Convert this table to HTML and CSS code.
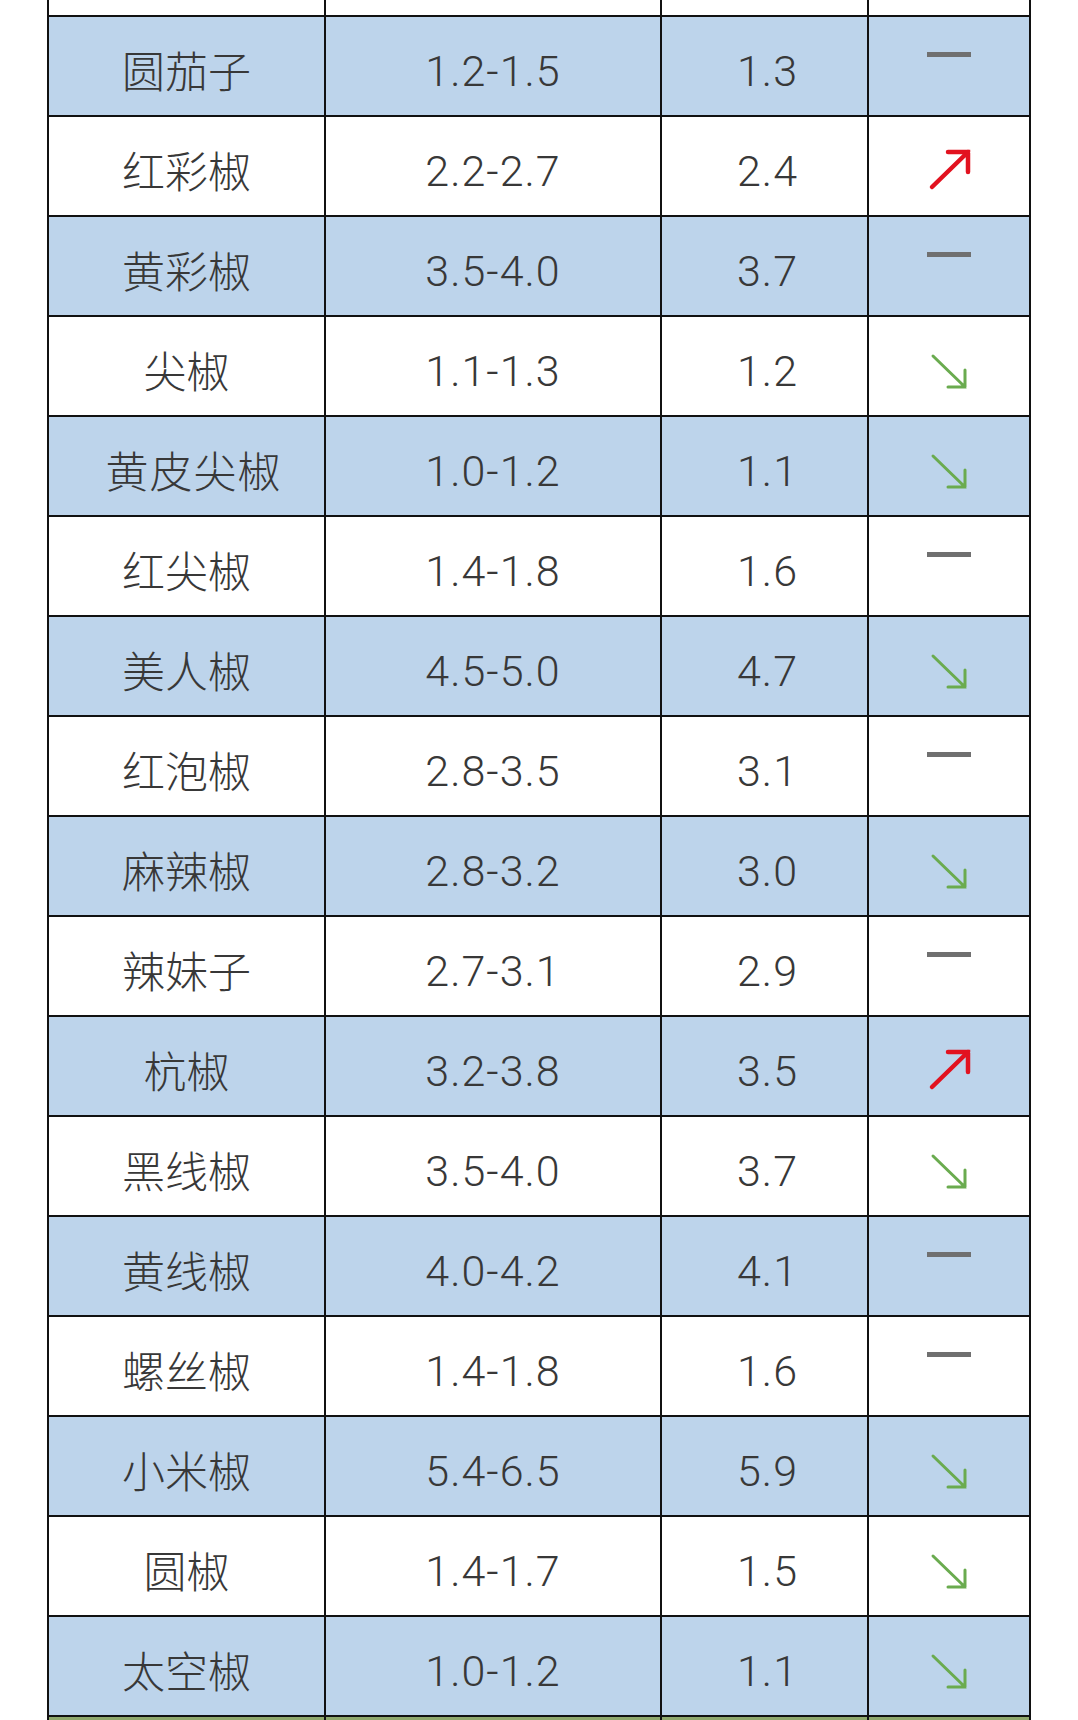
FILE: index.html
```html
<!DOCTYPE html>
<html lang="zh-CN">
<head>
<meta charset="utf-8">
<title>价格表</title>
<link rel="stylesheet" href="styles.css">
</head>
<body>
<div class="sheet">
  <div class="row partial"><div class="c name"></div><div class="c range"></div><div class="c avg"></div><div class="c trend"></div></div>

  <div class="row blue"><div class="c name">圆茄子</div><div class="c range">1.2-1.5</div><div class="c avg">1.3</div><div class="c trend"><svg class="ic" viewBox="0 0 44 40"><rect class="dash" x="0" y="3" width="44" height="5"/></svg></div></div>
  <div class="row"><div class="c name">红彩椒</div><div class="c range">2.2-2.7</div><div class="c avg">2.4</div><div class="c trend"><svg class="ic" viewBox="0 0 44 40"><path class="up" d="M5 38 L41 3 M21 3 H41 V23"/></svg></div></div>
  <div class="row blue"><div class="c name">黄彩椒</div><div class="c range">3.5-4.0</div><div class="c avg">3.7</div><div class="c trend"><svg class="ic" viewBox="0 0 44 40"><rect class="dash" x="0" y="3" width="44" height="5"/></svg></div></div>
  <div class="row"><div class="c name">尖椒</div><div class="c range">1.1-1.3</div><div class="c avg">1.2</div><div class="c trend"><svg class="ic" viewBox="0 0 44 40"><path class="down" d="M6 7 L38 38 M21 38 H38 V21"/></svg></div></div>
  <div class="row blue"><div class="c name wide">黄皮尖椒</div><div class="c range">1.0-1.2</div><div class="c avg">1.1</div><div class="c trend"><svg class="ic" viewBox="0 0 44 40"><path class="down" d="M6 7 L38 38 M21 38 H38 V21"/></svg></div></div>
  <div class="row"><div class="c name">红尖椒</div><div class="c range">1.4-1.8</div><div class="c avg">1.6</div><div class="c trend"><svg class="ic" viewBox="0 0 44 40"><rect class="dash" x="0" y="3" width="44" height="5"/></svg></div></div>
  <div class="row blue"><div class="c name">美人椒</div><div class="c range">4.5-5.0</div><div class="c avg">4.7</div><div class="c trend"><svg class="ic" viewBox="0 0 44 40"><path class="down" d="M6 7 L38 38 M21 38 H38 V21"/></svg></div></div>
  <div class="row"><div class="c name">红泡椒</div><div class="c range">2.8-3.5</div><div class="c avg">3.1</div><div class="c trend"><svg class="ic" viewBox="0 0 44 40"><rect class="dash" x="0" y="3" width="44" height="5"/></svg></div></div>
  <div class="row blue"><div class="c name">麻辣椒</div><div class="c range">2.8-3.2</div><div class="c avg">3.0</div><div class="c trend"><svg class="ic" viewBox="0 0 44 40"><path class="down" d="M6 7 L38 38 M21 38 H38 V21"/></svg></div></div>
  <div class="row"><div class="c name">辣妹子</div><div class="c range">2.7-3.1</div><div class="c avg">2.9</div><div class="c trend"><svg class="ic" viewBox="0 0 44 40"><rect class="dash" x="0" y="3" width="44" height="5"/></svg></div></div>
  <div class="row blue"><div class="c name">杭椒</div><div class="c range">3.2-3.8</div><div class="c avg">3.5</div><div class="c trend"><svg class="ic" viewBox="0 0 44 40"><path class="up" d="M5 38 L41 3 M21 3 H41 V23"/></svg></div></div>
  <div class="row"><div class="c name">黑线椒</div><div class="c range">3.5-4.0</div><div class="c avg">3.7</div><div class="c trend"><svg class="ic" viewBox="0 0 44 40"><path class="down" d="M6 7 L38 38 M21 38 H38 V21"/></svg></div></div>
  <div class="row blue"><div class="c name">黄线椒</div><div class="c range">4.0-4.2</div><div class="c avg">4.1</div><div class="c trend"><svg class="ic" viewBox="0 0 44 40"><rect class="dash" x="0" y="3" width="44" height="5"/></svg></div></div>
  <div class="row"><div class="c name">螺丝椒</div><div class="c range">1.4-1.8</div><div class="c avg">1.6</div><div class="c trend"><svg class="ic" viewBox="0 0 44 40"><rect class="dash" x="0" y="3" width="44" height="5"/></svg></div></div>
  <div class="row blue"><div class="c name">小米椒</div><div class="c range">5.4-6.5</div><div class="c avg">5.9</div><div class="c trend"><svg class="ic" viewBox="0 0 44 40"><path class="down" d="M6 7 L38 38 M21 38 H38 V21"/></svg></div></div>
  <div class="row"><div class="c name">圆椒</div><div class="c range">1.4-1.7</div><div class="c avg">1.5</div><div class="c trend"><svg class="ic" viewBox="0 0 44 40"><path class="down" d="M6 7 L38 38 M21 38 H38 V21"/></svg></div></div>
  <div class="row blue"><div class="c name">太空椒</div><div class="c range">1.0-1.2</div><div class="c avg">1.1</div><div class="c trend"><svg class="ic" viewBox="0 0 44 40"><path class="down" d="M6 7 L38 38 M21 38 H38 V21"/></svg></div></div>

  <div class="row green"><div class="c name"></div><div class="c range"></div><div class="c avg"></div><div class="c trend"></div></div>
</div>
</body>
</html>
```
FILE: styles.css
```css
html, body {
  margin: 0;
  padding: 0;
  background: #ffffff;
}

body {
  width: 1078px;
  height: 1720px;
  overflow: hidden;
}

.sheet {
  margin-left: 47px;
  width: 984px;
  border-left: 2px solid #111;
  box-sizing: border-box;
  display: flex;
  flex-direction: column;
}

.row {
  display: grid;
  grid-template-columns: 277px 336px 207px 162px;
  height: 100px;
  background: #ffffff;
}

.row.blue {
  background: #bdd4eb;
}

.row.partial {
  height: 17px;
}

.row.green {
  height: 40px;
  background: #8fa86c;
}

.c {
  box-sizing: border-box;
  border-right: 2px solid #111;
  border-bottom: 2px solid #111;
  display: flex;
  align-items: center;
  justify-content: center;
  padding-top: 10px;
  color: #383838;
  white-space: nowrap;
}

.partial .c {
  padding-top: 0;
}

.name {
  font-family: "Noto Sans CJK SC", "Noto Sans", sans-serif;
  font-weight: 300;
  font-size: 43px;
  padding-top: 6px;
}

.name.wide {
  padding-left: 14px;
  letter-spacing: 1px;
}

.range,
.avg {
  font-family: Roboto, "Liberation Sans", sans-serif;
  font-weight: 300;
  font-size: 43px;
  letter-spacing: 1px;
}

.avg {
  padding-left: 6px;
}

.trend {
  align-items: flex-start;
  padding-top: 32px;
}

.ic {
  width: 44px;
  height: 40px;
  display: block;
  overflow: visible;
}

.dash {
  fill: #707070;
}

.up {
  fill: none;
  stroke: #e2121f;
  stroke-width: 4.5;
  stroke-linecap: round;
  stroke-linejoin: miter;
}

.down {
  fill: none;
  stroke: #6aab4f;
  stroke-width: 3;
  stroke-linecap: round;
  stroke-linejoin: miter;
}
```
